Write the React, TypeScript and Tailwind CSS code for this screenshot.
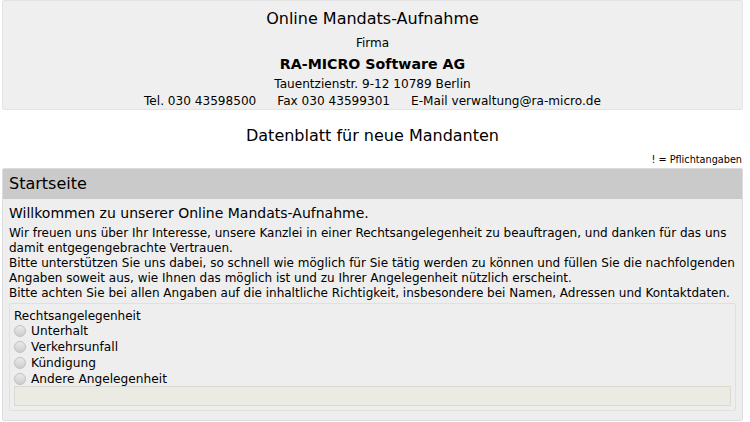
export default function App() {
  const options = ['Unterhalt', 'Verkehrsunfall', 'Kündigung', 'Andere Angelegenheit'];

  return (
    <div className="w-[750px] h-[422px] overflow-hidden bg-white text-black font-['DejaVu_Sans',Verdana,sans-serif]">
      <div className="ml-[2px] w-[741px]">
        {/* Kopfbereich */}
        <div className="bg-[#efefef] border border-[#e4e4e4] rounded-[2px] h-[110px] flex flex-col items-center">
          <div className="text-[16px] leading-[20px] mt-[8px]">Online Mandats-Aufnahme</div>
          <div className="text-[12px] leading-[14px] mt-[7px]">Firma</div>
          <div className="text-[14.2px] leading-[18px] font-bold mt-[5px]">RA-MICRO Software AG</div>
          <div className="text-[12.1px] leading-[15px] mt-[4px]">Tauentzienstr. 9-12 10789 Berlin</div>
          <div className="text-[12.1px] leading-[15px] mt-[2px] flex gap-[21px]">
            <span>Tel. 030 43598500</span>
            <span>Fax 030 43599301</span>
            <span>E-Mail verwaltung@ra-micro.de</span>
          </div>
        </div>

        <div className="text-center text-[16px] leading-[20px] mt-[16px]">Datenblatt für neue Mandanten</div>
        <div className="text-right text-[9.7px] leading-[12px] mt-[8px] pr-[1px]">! = Pflichtangaben</div>

        {/* Startseite */}
        <div className="mt-[2px] border border-[#dcdcdc] rounded-[2px]">
          <div className="bg-[#cacaca] h-[30px] flex items-center px-[6px] text-[16px]">Startseite</div>
          <div className="bg-[#eeeeee] px-[6px] pt-[5px] pb-[9px]">
            <div className="text-[14px] leading-[18px]">Willkommen zu unserer Online Mandats-Aufnahme.</div>
            <p className="text-[12px] leading-[15px] mt-[4px]">
              Wir freuen uns über Ihr Interesse, unsere Kanzlei in einer Rechtsangelegenheit zu beauftragen, und danken für das uns damit entgegengebrachte Vertrauen.
              <br />
              Bitte unterstützen Sie uns dabei, so schnell wie möglich für Sie tätig werden zu können und füllen Sie die nachfolgenden Angaben soweit aus, wie Ihnen das möglich ist und zu Ihrer Angelegenheit nützlich erscheint.
              <br />
              Bitte achten Sie bei allen Angaben auf die inhaltliche Richtigkeit, insbesondere bei Namen, Adressen und Kontaktdaten.
            </p>
            <div className="mt-[2px] border border-[#e0e0e0] rounded-[2px] px-[4px] pt-[5px] pb-[4px]">
              <div className="text-[12px] leading-[14px]">Rechtsangelegenheit</div>
              {options.map((o) => (
                <label key={o} className="flex items-center gap-[5px] text-[12.2px] leading-[16px]">
                  <span className="w-[12px] h-[12px] rounded-full border border-[#c0c0c0] bg-gradient-to-b from-[#ebebeb] to-[#cdcdcd] shrink-0" />
                  {o}
                </label>
              ))}
              <div className="-mt-[1px] h-[20px] bg-[#ebebe4] border border-[#d9d9d2]" />
            </div>
          </div>
        </div>
      </div>
    </div>
  );
}
